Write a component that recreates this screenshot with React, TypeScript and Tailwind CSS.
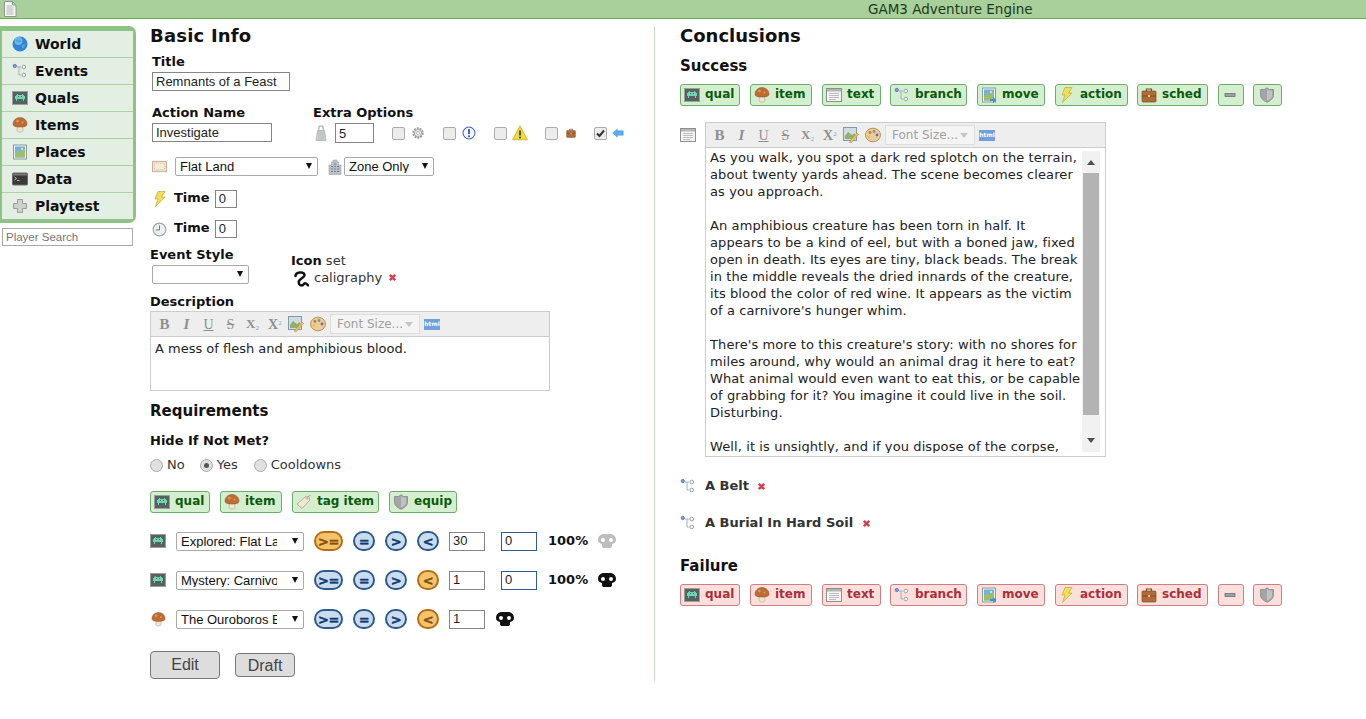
import React from "react";

const sans = "font-['DejaVu_Sans',sans-serif]";
const arial = "font-['Liberation_Sans',Arial,sans-serif]";

type IP = { className?: string };
const Svg = ({ className = "w-4 h-4", children, vb = "0 0 16 16" }: IP & { children: React.ReactNode; vb?: string }) => (
  <svg viewBox={vb} className={`block shrink-0 ${className}`}>{children}</svg>
);

const Doc = ({ className }: IP) => (
  <Svg className={className}>
    <path d="M2.5.5h8l3.5 3.5v11.5h-11.5z" fill="#f7f7f4" stroke="#8a9a90" />
    <path d="M10.5.5v3.5h3.500z" fill="#cfd8d2" stroke="#8a9a90" />
    <path d="M4.500 5h6M4.500 7h7M4.500 9h7M4.500 11h7M4.500 13h7" stroke="#a9b4bc" strokeWidth="1" />
  </Svg>
);
const Globe = ({ className }: IP) => (
  <Svg className={className}>
    <circle cx="8" cy="8" r="7.500" fill="#2f86d6" />
    <circle cx="6.500" cy="5" r="4" fill="#7cc0f2" opacity=".8" />
    <path d="M4 4c2-1 4 0 5 1s-2 2-3 1-2 0-2-2zM10 9l3-1-1 4-2 0z" fill="#5aa0d8" />
  </Svg>
);
const Branch = ({ className }: IP) => (
  <Svg className={className}>
    <path d="M5 4h4M7 4v8h2" fill="none" stroke="#a8b0b4" strokeWidth="1" />
    <circle cx="2.800" cy="3" r="1.700" fill="#7c9fe0" stroke="#4a68b0" strokeWidth=".7" />
    <circle cx="11.800" cy="4" r="1.800" fill="#fff" stroke="#9aa0a5" />
    <circle cx="11.800" cy="12" r="1.800" fill="#fff" stroke="#9aa0a5" />
  </Svg>
);
const Invader = ({ className }: IP) => (
  <Svg className={className}>
    <rect x=".5" y="1.500" width="15" height="13" fill="#566260" stroke="#9a9e9d" />
    <path d="M5 4h1v1h4V4h1v1h1v1h1v3h-1v2h-1V9H5v2H4V9H3V6h1V5h1zM6 6v1h1V6zm3 0v1h1V6z" fill="#6fd6b4" />
  </Svg>
);
const Mushroom = ({ className }: IP) => (
  <Svg className={className}>
    <path d="M5.500 9.500h5l.5 4c0 2-6 2-6 0z" fill="#f1e4cf" stroke="#b9a386" strokeWidth=".6" />
    <path d="M8 .5c4 0 7 3 7 6.500 0 2.500-3 3-7 3s-7-.5-7-3C1 3.500 4 .5 8 .5z" fill="#bd6d33" stroke="#8f4d20" strokeWidth=".5" />
    <circle cx="5.500" cy="4" r="1.300" fill="#dc9a5f" />
    <circle cx="10.500" cy="5.500" r="1" fill="#dc9a5f" />
  </Svg>
);
const Picture = ({ className, arrow }: IP & { arrow?: boolean }) => (
  <Svg className={className}>
    <rect x="1.500" y="1" width="13" height="14" fill="#eef3f6" stroke="#8e9aa0" />
    <rect x="3" y="2.500" width="10" height="11" fill="#6db2e0" />
    <path d="M3 9l3-3 3 2 4-3v8.500H3z" fill="#9cc06a" />
    <circle cx="10" cy="5" r="1.200" fill="#f2e27a" />
    {arrow && <path d="M9 12h3v-2l3.500 3-3.500 3v-2H9z" fill="#3b93d6" />}
  </Svg>
);
const Terminal = ({ className }: IP) => (
  <Svg className={className}>
    <rect x=".5" y="2" width="15" height="12" rx="1" fill="#3a3a3a" stroke="#6a6a6a" />
    <rect x="1" y="2.500" width="14" height="2" fill="#777" />
    <path d="M2.500 6l2 1.500-2 1.500M5 9.500h2.500" stroke="#ddd" strokeWidth=".8" fill="none" />
  </Svg>
);
const Cross = ({ className }: IP) => (
  <Svg className={className}>
    <path d="M5.500 1.500h5v4h4v5h-4v4h-5v-4h-4v-5h4z" fill="#d0d0d0" stroke="#9c9c9c" />
  </Svg>
);
const Panel = ({ className }: IP) => (
  <Svg className={className}>
    <rect x=".5" y="1.500" width="15" height="13" fill="#f4f4f4" stroke="#8e8e8e" />
    <rect x="1" y="2" width="14" height="2.500" fill="#b5b5b5" />
    <path d="M3 6.500h10M3 8.500h10M3 10.500h10M3 12.500h7" stroke="#bdbdbd" />
  </Svg>
);
const Bolt = ({ className }: IP) => (
  <Svg className={className}>
    <path d="M6 .5h7L9.500 6H13L3.500 15.500 6 8H3z" fill="#f1de5a" stroke="#c2a92f" strokeWidth=".7" />
  </Svg>
);
const Clock = ({ className }: IP) => (
  <Svg className={className}>
    <circle cx="8" cy="8" r="6.800" fill="#eef0f0" stroke="#9da4a9" strokeWidth="1.200" />
    <path d="M8 3.500V8.500H4" fill="none" stroke="#666" strokeWidth=".9" />
  </Svg>
);
const Weight = ({ className }: IP) => (
  <Svg className={className}>
    <path d="M3 15.500l1.500-10h7l1.500 10z" fill="#cfd3d0" stroke="#a5a9a6" strokeWidth=".7" />
    <path d="M5.800 5.500V3a2.200 2.200 0 0 1 4.400 0v2.500" fill="none" stroke="#b3b6b4" strokeWidth="1.300" />
    <path d="M8 6v9M6 6v9M10 6v9" stroke="#aeb2af" strokeWidth=".7" />
  </Svg>
);
const Gear = ({ className }: IP) => (
  <Svg className={className}>
    <circle cx="8" cy="8" r="5" fill="#d5d5d5" stroke="#9a9a9a" strokeWidth="3" strokeDasharray="2 1.100" />
    <circle cx="8" cy="8" r="4" fill="#ededed" stroke="#a5a5a5" strokeWidth=".8" />
    <circle cx="8" cy="8" r="1.800" fill="#fff" stroke="#a5a5a5" strokeWidth=".8" />
  </Svg>
);
const Info = ({ className }: IP) => (
  <Svg className={className}>
    <circle cx="8" cy="8" r="6.800" fill="#f6f8fe" stroke="#3f66d0" strokeWidth="1.200" />
    <path d="M8 3.500v6" stroke="#27409a" strokeWidth="1.800" />
    <circle cx="8" cy="11.800" r="1.100" fill="#27409a" />
  </Svg>
);
const Warn = ({ className }: IP) => (
  <Svg className={className}>
    <path d="M8 .8l7.500 14H.5z" fill="#efdc3e" stroke="#c4ad25" strokeWidth=".8" />
    <path d="M8 5.500v5" stroke="#333" strokeWidth="1.600" />
    <circle cx="8" cy="12.400" r="1" fill="#333" />
  </Svg>
);
const Case = ({ className }: IP) => (
  <Svg className={className}>
    <path d="M5.500 4V2h5v2" fill="none" stroke="#7a4a22" strokeWidth="1.200" />
    <rect x="1" y="4" width="14" height="11" rx="1" fill="#b06c38" stroke="#7d4a22" strokeWidth=".7" />
    <path d="M1 9h14" stroke="#7d4a22" />
    <rect x="7" y="8" width="2" height="2" fill="#e3c682" />
  </Svg>
);
const ArrowL = ({ className }: IP) => (
  <Svg className={className}>
    <path d="M1 8l6-5.500V5h8v6H7v2.500z" fill="#56b0ef" stroke="#3a90d0" strokeWidth=".6" />
  </Svg>
);
const Building = ({ className }: IP) => (
  <Svg className={className}>
    <path d="M2 15.500V6h2.500V3H6V1h4v2h1.500v3H14v9.500z" fill="#b9c0c8" stroke="#9aa3ab" strokeWidth=".6" />
    <path d="M4 7.500h2M7 7.500h2M10 7.500h2M4 10h2M7 10h2M10 10h2M4 12.500h2M7 12.500h2M10 12.500h2M7 5h2" stroke="#77828c" />
  </Svg>
);
const MapIcon = ({ className }: IP) => (
  <Svg className={className}>
    <rect x=".5" y="2.500" width="15" height="11" fill="#efe3d3" stroke="#c9ab92" />
    <rect x="2.500" y="4.500" width="11" height="7" fill="#f3ecd9" stroke="#cfc0a8" strokeDasharray="1 1" />
  </Svg>
);
const Tag = ({ className }: IP) => (
  <Svg className={className}>
    <path d="M1 10L9 3l4-.5.500 4-7.500 8z" fill="#f2e7cf" stroke="#a8997a" strokeWidth=".7" />
    <circle cx="11" cy="4.500" r=".8" fill="#fff" stroke="#8e8068" strokeWidth=".5" />
    <path d="M11.500 4C12 1.500 14 1 15 1.500" fill="none" stroke="#a8a8a8" strokeWidth=".6" />
  </Svg>
);
const Shield = ({ className }: IP) => (
  <Svg className={className}>
    <path d="M8 .8l2.500 1.700H14.500v6c0 3-3.500 5.500-6.500 6.800-3-1.300-6.500-3.800-6.500-6.800v-6h4z" fill="#a3a5a8" stroke="#83888c" strokeWidth=".8" />
    <path d="M8 2l2 1.500h3V8.500c0 2.500-2.500 4-5 5.300z" fill="#c0c2c4" />
  </Svg>
);
const Minus = ({ className }: IP) => (
  <Svg className={className}>
    <rect x="3" y="6.500" width="10" height="3" fill="#9aa0a4" stroke="#6c7276" strokeWidth=".8" />
  </Svg>
);
const Skull = ({ className, color = "#111" }: IP & { color?: string }) => (
  <Svg className={className} vb="0 0 18 16">
    <path fillRule="evenodd" fill={color} d="M6 1h6c3.500 0 6 2.500 6 6 0 2.500-2 3.700-4 4V13c0 1.500-1 2-2 2H6c-1 0-2-.5-2-2v-2C2 10.700 0 9.500 0 7 0 3.500 2.500 1 6 1zM5 5a2 2 0 1 0 0 4 2 2 0 0 0 0-4zm8 0a2 2 0 1 0 0 4 2 2 0 0 0 0-4z" />
  </Svg>
);
const Caligraphy = ({ className }: IP) => (
  <Svg className={className}>
    <path d="M2.500 5C2.500 1 11 0 11.500 4c.3 2.500-4.500 3.500-5.500 6-.8 2.200.5 4.500 2.800 4.500 2 0 1.700-2.200 3.200-2.200s2 1 3.200 2" fill="none" stroke="#111" strokeWidth="2.500" strokeLinecap="round" />
  </Svg>
);
const XMark = ({ className = "" }: IP) => (
  <svg viewBox="0 0 10 10" className={`block shrink-0 w-[9px] h-[9px] ${className}`}>
    <path d="M2 2l6 6M8 2l-6 6" stroke="#d2424f" strokeWidth="2.800" />
  </svg>
);

const serif = "font-['Liberation_Serif',serif]";
const Toolbar = () => (
  <div className={`flex items-center bg-[#eeeeee] border-b border-[#cccccc] h-[25px] pl-[8px] ${sans} text-[#8f8f8f]`}>
    <span className={`w-[11px] text-center text-[15px] font-bold ${serif}`}>B</span>
    <span className={`w-[11px] ml-[11px] text-center text-[15px] italic font-bold ${serif}`}>I</span>
    <span className={`w-[11px] ml-[11px] text-center text-[14px] underline ${serif}`}>U</span>
    <span className={`w-[11px] ml-[11px] text-center text-[14px] line-through ${serif}`}>S</span>
    <span className={`ml-[10px] w-[13px] text-[13px] font-bold ${serif}`}>X<sub className="text-[7px] text-[#7aa7dc] font-normal">2</sub></span>
    <span className={`ml-[9px] w-[14px] text-[14px] font-bold ${serif}`}>X<sup className="text-[7px] text-[#7aa7dc] font-normal">2</sup></span>
    <svg viewBox="0 0 16 16" className="ml-[6px] w-4 h-4 shrink-0">
      <rect x=".5" y=".5" width="13" height="13" fill="#cfdde0" stroke="#7f9bb3" />
      <path d="M2 9l3-4 4 3 3-2v6H2z" fill="#93b06a" />
      <path d="M7 14l7-8 1.500 1.500-7 8-2 .500z" fill="#edc45a" stroke="#a9832c" strokeWidth=".5" />
    </svg>
    <svg viewBox="0 0 16 16" className="ml-[6px] w-4 h-4 shrink-0">
      <ellipse cx="8" cy="8" rx="7.500" ry="6.800" fill="#eccb98" stroke="#b98f5b" />
      <circle cx="5" cy="5.500" r="1.400" fill="#d66" />
      <circle cx="9" cy="4.500" r="1.400" fill="#6a6" />
      <circle cx="12" cy="8" r="1.400" fill="#66c" />
      <circle cx="4" cy="9.500" r="1.400" fill="#dc4" />
    </svg>
    <div className="ml-[4px] flex items-center justify-between w-[90px] h-[20px] bg-[#f4f4f4] border border-[#dddddd] pl-[6px] pr-[6px] text-[12px] text-[#a0a0a0]">
      <span className="whitespace-nowrap">Font Size...</span>
      <span className="w-0 h-0 border-l-[4px] border-r-[4px] border-t-[5px] border-l-transparent border-r-transparent border-t-[#c5c5c5]" />
    </div>
    <span className="ml-[4px] flex items-center justify-center w-[16px] h-[11px] bg-[#6f9fdc] text-[6px] font-bold text-white leading-none">html</span>
  </div>
);

const Sel = ({ w, value, pr = "pr-[26px]" }: { w: string; value: string; pr?: string }) => (
  <div className={`relative block ${w} h-[19px] shrink-0`}>
    <select
      defaultValue={value}
      className={`block appearance-none w-full h-full bg-white border border-[#a9a9a9] rounded-[2px] pl-[4px] ${pr} text-[13px] leading-none text-[#111] ${arial} outline-none`}
    >
      <option value={value}>{value}</option>
    </select>
    <span className="absolute right-[6px] top-[6px] w-0 h-0 border-l-[3.500px] border-r-[3.500px] border-t-[6px] border-l-transparent border-r-transparent border-t-[#111] pointer-events-none" />
  </div>
);

const Inp = ({ w, value, h = "h-[18px]", blue }: { w: string; value: string; h?: string; blue?: boolean }) => (
  <input
    readOnly
    value={value}
    className={`block ${w} ${h} shrink-0 bg-white border ${blue ? "border-[#33598f]" : "border-[#858585]"} pl-[3px] text-[13px] text-[#222] ${arial} outline-none`}
  />
);

const Cb = ({ checked }: { checked?: boolean }) => (
  <span className="relative block w-[13px] h-[13px] shrink-0">
    <input
      type="checkbox"
      readOnly
      checked={!!checked}
      className="appearance-none block w-[13px] h-[13px] rounded-[2px] border border-[#ababab] bg-[#ececec]"
    />
    {checked && (
      <svg viewBox="0 0 13 13" className="absolute inset-0 w-[13px] h-[13px]">
        <path d="M3 6.500l2.500 2.500L10 3.500" fill="none" stroke="#333" strokeWidth="2" />
      </svg>
    )}
  </span>
);

const Radio = ({ checked }: { checked?: boolean }) => (
  <span className="relative block w-[13px] h-[13px] shrink-0">
    <input
      type="radio"
      readOnly
      checked={!!checked}
      className="appearance-none block w-[13px] h-[13px] rounded-full border border-[#a9a9a9] bg-[#e0e0e0]"
    />
    {checked && <span className="absolute left-[4px] top-[4px] w-[5px] h-[5px] rounded-full bg-[#555]" />}
  </span>
);

const greenB = "bg-[#d3efcf] border-[#6dac6d] text-[#0b5a0b]";
const redB = "bg-[#fde0dc] border-[#cf7d80] text-[#a9303a]";

const Badge = ({ icon, label, tone, w, ml }: { icon: React.ReactNode; label?: string; tone: string; w: string; ml: string }) => (
  <button className={`flex items-center ${w} ${ml} h-[22px] shrink-0 border rounded-[3px] pl-[3px] ${tone} ${sans} text-[12px] font-bold whitespace-nowrap`}>
    {icon}
    {label && <span className="ml-[5px] pb-[2px]">{label}</span>}
  </button>
);

const I16 = "w-[16px] h-[16px]";
const ConcBadges = ({ tone }: { tone: string }) => (
  <div className="flex">
    <Badge tone={tone} w="w-[60px]" ml="ml-0" icon={<Invader className={I16} />} label="qual" />
    <Badge tone={tone} w="w-[62px]" ml="ml-[10px]" icon={<Mushroom className={I16} />} label="item" />
    <Badge tone={tone} w="w-[59px]" ml="ml-[10px]" icon={<Panel className={I16} />} label="text" />
    <Badge tone={tone} w="w-[77px]" ml="ml-[9px]" icon={<Branch className={I16} />} label="branch" />
    <Badge tone={tone} w="w-[68px]" ml="ml-[10px]" icon={<Picture arrow className={I16} />} label="move" />
    <Badge tone={tone} w="w-[73px]" ml="ml-[10px]" icon={<Bolt className={I16} />} label="action" />
    <Badge tone={tone} w="w-[71px]" ml="ml-[9px]" icon={<Case className={I16} />} label="sched" />
    <Badge tone={tone} w="w-[26px]" ml="ml-[10px]" icon={<Minus className={I16} />} />
    <Badge tone={tone} w="w-[29px]" ml="ml-[9px]" icon={<Shield className="w-[20px] h-[16px]" />} />
  </div>
);

const Pill = ({ children, on, wide }: { children: string; on?: boolean; wide?: boolean }) => (
  <span
    className={`flex items-center justify-center shrink-0 h-[20px] ${wide ? "w-[29px]" : "w-[22px]"} rounded-full border-2 ${on ? "bg-[#f2c36b] border-[#b56d14] text-[#8a4d08]" : "bg-[#cbdcee] border-[#2f5a8c] text-[#0e3a72]"} ${sans} text-[13px] font-bold leading-none tracking-[-0.5px] [-webkit-text-stroke:0.4px_currentColor]`}
  >
    {children}
  </span>
);

const NAV: [React.FC<IP>, string][] = [
  [Globe, "World"],
  [Branch, "Events"],
  [Invader, "Quals"],
  [Mushroom, "Items"],
  [Picture, "Places"],
  [Terminal, "Data"],
  [Cross, "Playtest"],
];

const ReqRow = ({
  icon,
  sel,
  on,
  val,
  extra,
  mt,
}: {
  icon: React.ReactNode;
  sel: string;
  on: number;
  val: string;
  extra?: { color: string };
  mt: string;
}) => (
  <div className={`flex items-center h-[20px] ${mt}`}>
    <span className="w-[16px] flex justify-center shrink-0">{icon}</span>
    <span className="ml-[10px] flex"><Sel w="w-[128px]" value={sel} /></span>
    <span className="ml-[10px] flex"><Pill on={on === 0} wide>{">="}</Pill></span>
    <span className="ml-[10px] flex"><Pill>=</Pill></span>
    <span className="ml-[10px] flex"><Pill>{">"}</Pill></span>
    <span className="ml-[10px] flex"><Pill on={on === 3}>{"<"}</Pill></span>
    <span className="ml-[10px] flex"><Inp w="w-[36px]" h="h-[19px]" value={val} /></span>
    {extra ? (
      <>
        <span className="ml-[16px] flex"><Inp w="w-[36px]" h="h-[19px]" blue value="0" /></span>
        <span className={`ml-[11px] w-[44px] ${sans} text-[13px] font-bold text-[#111]`}>100%</span>
        <Skull className="ml-[6px] w-[18px] h-[16px]" color={extra.color} />
      </>
    ) : (
      <Skull className="ml-[11px] w-[18px] h-[16px]" color="#111" />
    )}
  </div>
);

const Paragraphs = [
  "As you walk, you spot a dark red splotch on the terrain, about twenty yards ahead. The scene becomes clearer as you approach.",
  "An amphibious creature has been torn in half. It appears to be a kind of eel, but with a boned jaw, fixed open in death. Its eyes are tiny, black beads. The break in the middle reveals the dried innards of the creature, its blood the color of red wine. It appears as the victim of a carnivore's hunger whim.",
  "There's more to this creature's story: with no shores for miles around, why would an animal drag it here to eat? What animal would even want to eat this, or be capable of grabbing for it? You imagine it could live in the soil. Disturbing.",
  "Well, it is unsightly, and if you dispose of the corpse, perhaps it will keep the area clean.",
];

const label = `${sans} text-[13px] font-bold text-[#111] leading-[16px]`;

export default function App() {
  return (
    <div className={`w-[1366px] h-[719px] overflow-hidden bg-white ${sans} text-[#222]`}>
      <header className="flex items-center h-[19px] bg-[#a9cf9a] border-b border-[#6cad5c]">
        <Doc className="ml-[2px] w-[16px] h-[16px]" />
        <div className="ml-[850px] text-[13.500px] leading-[18px] text-[#1c3a1c] whitespace-nowrap">GAM3 Adventure Engine</div>
      </header>

      <div className="flex pt-[7px]">
        <aside className="w-[136px] shrink-0">
          <nav className="border-[2px] border-t-[5px] border-b-[4px] border-r-[3px] border-[#8fc285] rounded-r-[7px] bg-[#a9d3a0] flex flex-col gap-[1px]">
            {NAV.map(([I, n]) => (
              <div key={n} className="flex items-center h-[26px] bg-[#e3efe2] pl-[10px]">
                <I className="w-[16px] h-[16px]" />
                <span className="ml-[7px] pt-[1px] text-[14px] font-bold text-[#111]">{n}</span>
              </div>
            ))}
          </nav>
          <input
            readOnly
            placeholder="Player Search"
            className={`block ml-[2px] mt-[5px] w-[131px] h-[18px] border border-[#a9a9a9] pl-[3px] text-[11.500px] ${arial} placeholder:text-[#757575] outline-none`}
          />
        </aside>

        <main className="ml-[14px] w-[505px] h-[655px] shrink-0 border-r border-[#c5dfc0]">
          <h1 className="text-[18px] font-bold leading-[20px] text-[#111] tracking-[0.2px]">Basic Info</h1>
          <div className={`${label} ml-[2px] mt-[8px]`}>Title</div>
          <div className="ml-[2px] mt-[2px]"><Inp w="w-[138px]" h="h-[19px]" value="Remnants of a Feast" /></div>

          <div className="flex ml-[2px] mt-[14px]">
            <div>
              <div className={label}>Action Name</div>
              <div className="mt-[2px]"><Inp w="w-[120px]" h="h-[19px]" value="Investigate" /></div>
            </div>
            <div className="ml-[41px]">
              <div className={label}>Extra Options</div>
              <div className="flex items-center h-[20px] mt-[2px]">
                <Weight className="w-[16px] h-[16px]" />
                <span className="ml-[6px] flex"><Inp w="w-[39px]" h="h-[20px]" value="5" /></span>
                <span className="ml-[18px] flex"><Cb /></span>
                <Gear className="ml-[6px] w-[14px] h-[14px]" />
                <span className="ml-[18px] flex"><Cb /></span>
                <Info className="ml-[6px] w-[14px] h-[14px]" />
                <span className="ml-[18px] flex"><Cb /></span>
                <Warn className="ml-[5px] w-[16px] h-[16px]" />
                <span className="ml-[17px] flex"><Cb /></span>
                <Case className="ml-[8px] w-[10px] h-[10px]" />
                <span className="ml-[18px] flex"><Cb checked /></span>
                <ArrowL className="ml-[5px] w-[12px] h-[12px]" />
              </div>
            </div>
          </div>

          <div className="flex items-center ml-[2px] mt-[14px]">
            <MapIcon className="w-[15px] h-[15px]" />
            <span className="ml-[8px] flex"><Sel w="w-[143px]" value="Flat Land" /></span>
            <Building className="ml-[9px] w-[16px] h-[16px]" />
            <span className="ml-[1px] flex"><Sel w="w-[90px]" pr="pr-[18px]" value="Zone Only" /></span>
          </div>

          <div className="flex items-center ml-[2px] mt-[14px] h-[18px]">
            <Bolt className="w-[16px] h-[16px]" />
            <span className={`${label} ml-[6px] pb-[2px]`}>Time</span>
            <span className="ml-[5px] flex"><Inp w="w-[22px]" value="0" /></span>
          </div>
          <div className="flex items-center ml-[2px] mt-[12px] h-[18px]">
            <Clock className="w-[15px] h-[15px]" />
            <span className={`${label} ml-[7px] pb-[2px]`}>Time</span>
            <span className="ml-[5px] flex"><Inp w="w-[22px]" value="0" /></span>
          </div>

          <div className="flex mt-[9px]">
            <div>
              <div className={label}>Event Style</div>
              <div className="ml-[2px] mt-[2px]"><Sel w="w-[97px]" value="" /></div>
            </div>
            <div className="ml-[42px] mt-[6px]">
              <div className="text-[13px] leading-[16px] text-[#333]"><span className="font-bold text-[#111]">Icon</span> set</div>
              <div className="flex items-center h-[17px] text-[13px] text-[#333]">
                <Caligraphy className="ml-[2px] mt-[2px] w-[16px] h-[16px]" />
                <span className="ml-[5px]">caligraphy</span>
                <XMark className="ml-[6px]" />
              </div>
            </div>
          </div>

          <div className={`${label} mt-[8px]`}>Description</div>
          <div className="w-[400px] h-[80px] mt-[1px] border border-[#cccccc]">
            <Toolbar />
            <div className="px-[4px] pt-[3px] text-[13px] leading-[17px] text-[#222]">A mess of flesh and amphibious blood.</div>
          </div>

          <h2 className="mt-[10px] text-[15px] font-bold leading-[20px] text-[#111]">Requirements</h2>
          <div className="mt-[12px] text-[13px] font-bold leading-[16px] text-[#111]">Hide If Not Met?</div>
          <div className="flex items-center mt-[8px] h-[16px] text-[13px] text-[#333]">
            <Radio /><span className="ml-[4px]">No</span>
            <span className="ml-[15px] flex"><Radio checked /></span><span className="ml-[4px]">Yes</span>
            <span className="ml-[16px] flex"><Radio /></span><span className="ml-[4px]">Cooldowns</span>
          </div>

          <div className="flex mt-[18px]">
            <Badge tone={greenB} w="w-[60px]" ml="ml-0" icon={<Invader className={I16} />} label="qual" />
            <Badge tone={greenB} w="w-[62px]" ml="ml-[10px]" icon={<Mushroom className={I16} />} label="item" />
            <Badge tone={greenB} w="w-[87px]" ml="ml-[10px]" icon={<Tag className={I16} />} label="tag item" />
            <Badge tone={greenB} w="w-[68px]" ml="ml-[10px]" icon={<Shield className={I16} />} label="equip" />
          </div>

          <ReqRow mt="mt-[18px]" icon={<Invader className={I16} />} sel="Explored: Flat Land" on={0} val="30" extra={{ color: "#bdbdbd" }} />
          <ReqRow mt="mt-[19px]" icon={<Invader className={I16} />} sel="Mystery: Carnivore" on={3} val="1" extra={{ color: "#111" }} />
          <ReqRow mt="mt-[19px]" icon={<Mushroom className="w-[15px] h-[15px]" />} sel="The Ouroboros Belt" on={3} val="1" />

          <div className="flex items-center mt-[22px]">
            <button className={`w-[70px] h-[28px] bg-[#dddddd] border border-[#777777] rounded-[4px] text-[16px] text-[#444] ${arial}`}>Edit</button>
            <button className={`ml-[15px] w-[60px] h-[24px] bg-[#dddddd] border border-[#777777] rounded-[4px] text-[16px] text-[#444] ${arial}`}>Draft</button>
          </div>
        </main>

        <section className="ml-[25px] w-[640px]">
          <h1 className="text-[18px] font-bold leading-[20px] text-[#111]">Conclusions</h1>
          <h2 className="mt-[11px] text-[15px] font-bold leading-[18px] text-[#111]">Success</h2>
          <div className="mt-[9px]"><ConcBadges tone={greenB} /></div>

          <div className="flex mt-[16px]">
            <Panel className="mt-[5px] w-[16px] h-[16px]" />
            <div className="ml-[9px] w-[401px] h-[335px] border border-[#cccccc] flex flex-col">
              <Toolbar />
              <div className="flex flex-1 min-h-0 pl-[4px] pr-[5px] pb-[3px]">
                <div className="w-[372px] pt-[1px] shrink-0 text-[13px] leading-[17px] tracking-[0.1px] text-[#222] overflow-hidden">
                  {Paragraphs.map((p, i) => (
                    <p key={i} className="mb-[17px]">{p}</p>
                  ))}
                </div>
                <div className="mt-[3px] mb-[1px] w-[18px] shrink-0 flex flex-col bg-[#f1f1f1]">
                  <div className="h-[22px] flex items-center justify-center">
                    <span className="w-0 h-0 border-l-[4px] border-r-[4px] border-b-[5px] border-l-transparent border-r-transparent border-b-[#505050]" />
                  </div>
                  <div className="mx-[1px] h-[242px] bg-[#b3b3b3]" />
                  <div className="flex-1 flex items-center justify-center pt-[14px]">
                    <span className="w-0 h-0 border-l-[4px] border-r-[4px] border-t-[5px] border-l-transparent border-r-transparent border-t-[#505050]" />
                  </div>
                </div>
              </div>
            </div>
          </div>

          <div className="flex items-center mt-[21px] h-[16px]">
            <Branch className={I16} />
            <span className="ml-[9px] text-[13px] font-bold text-[#333] whitespace-nowrap">A Belt</span>
            <XMark className="ml-[8px]" />
          </div>
          <div className="flex items-center mt-[21px] h-[16px]">
            <Branch className={I16} />
            <span className="ml-[9px] text-[13px] font-bold text-[#333] whitespace-nowrap">A Burial In Hard Soil</span>
            <XMark className="ml-[9px]" />
          </div>

          <h2 className="mt-[26px] text-[15px] font-bold leading-[18px] text-[#111]">Failure</h2>
          <div className="mt-[9px]"><ConcBadges tone={redB} /></div>
        </section>
      </div>
    </div>
  );
}
